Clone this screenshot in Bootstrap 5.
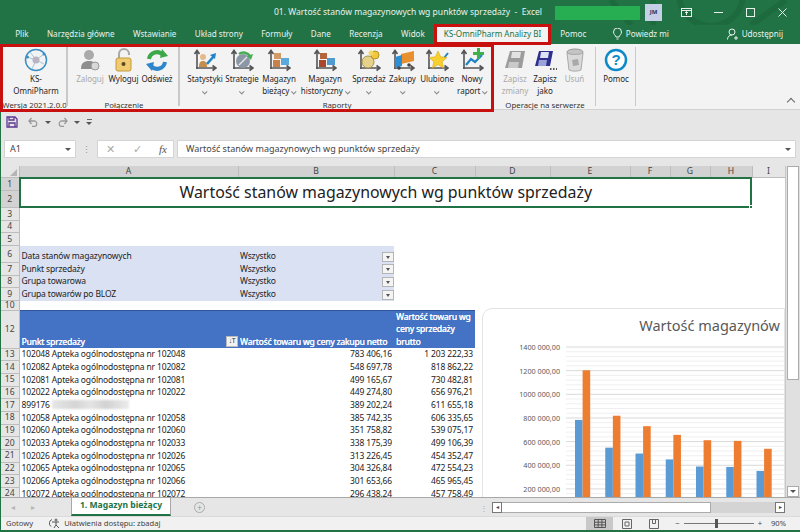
<!DOCTYPE html>
<html lang="pl">
<head>
<meta charset="UTF-8">
<title>KS-OmniPharm Analizy BI</title>
<link href="https://cdn.jsdelivr.net/npm/bootstrap@5.3.0/dist/css/bootstrap.min.css" rel="stylesheet">
<style>
  html, body { width: 800px; height: 532px; overflow: hidden; margin: 0; }
  body { font-family: "Noto Sans", "Liberation Sans", sans-serif; font-size: 8px; color: #333; background: #217346; }
  .app { width: 800px; height: 532px; border-left: 1px solid #217346; border-bottom: 2px solid #217346; background: #e6e6e6; }

  /* title bar */
  .titlebar { height: 25px; background: #217346; color: #fff; position: relative; }
  .titlebar .doc { width: 553px; padding-left: 261px; text-align: center; font-size: 8.550px; color: #e8f1ec; white-space: nowrap; }
  .titlebar .acct { width: 85px; height: 14px; background: #27ae52; margin: 0 5px 0 1px; }
  .titlebar .avatar { width: 17px; height: 17px; background: #c5d0e6; color: #1f3864; font-size: 6px; font-weight: 700; }
  .titlebar .win { width: 32px; }
  .titlebar .deco { position: absolute; left: 600px; top: 0; }

  /* tabs */
  .tabs { height: 19px; background: #217346; color: #e8f1ec; font-size: 8.1px; padding-left: 5px; }
  .tabs .t { padding: 0 9.2px; white-space: nowrap; }
  .tabs .t.active { background: #f3f3f3; color: #217346; height: 21px; padding: 0; width: 117px; justify-content: center; outline: 3px solid #c8100f; outline-offset: -3px; position: relative; z-index: 3; }
  .tabs .share { margin-left: auto; padding-right: 17px; }

  /* ribbon */
  .ribbon { height: 66px; background: #f3f3f3; border-bottom: 1px solid #d2d2d2; position: relative; }
  .rbox { position: absolute; left: -1px; top: 0; width: 494px; height: 68px; border: 3px solid #c8100f; z-index: 2; pointer-events: none; }
  .grp { position: relative; height: 65px; padding-top: 4px; }
  .grp::after { content: ""; position: absolute; right: 0; top: 3px; bottom: 3px; width: 1px; background: #c9c9c9; }
  .g1 { width: 67px; padding-left: 3px; }
  .g2 { width: 112px; padding-left: 5px; }
  .g3 { width: 314px; padding-left: 6px; }
  .g4 { width: 102px; padding-left: 6px; }
  .g5 { width: 40px; }
  .g1::after, .g2::after, .g3::after { width: 2px; }
  .grp .lbl { position: absolute; left: 0; right: 0; bottom: -2px; text-align: center; font-size: 7.8px; line-height: 12px; white-space: nowrap; }
  .rb { text-align: center; line-height: 12px; font-size: 8px; letter-spacing: -.05px; color: #262626; white-space: nowrap; }
  .rb svg { display: block; margin: 0 auto 1px; }
  .rb.off { color: #a9a9a9; }
  .b29 { width: 29px; } .b30 { width: 30px; } .b33 { width: 33px; } .b34 { width: 34px; }
  .b36 { width: 36px; } .b38 { width: 38px; } .b40 { width: 40px; } .b54 { width: 54px; } .b64 { width: 64px; }
  .car { display: inline-block; width: 3.500px; height: 3.500px; border-right: 1px solid #888; border-bottom: 1px solid #888; transform: rotate(45deg) translate(-1px, -1px); margin-left: 3px; }
  .car.solo { margin-left: 0; }
  .collapse-up { position: absolute; right: 6px; bottom: 4px; width: 6px; height: 6px; border-left: 1px solid #666; border-top: 1px solid #666; transform: rotate(45deg); }

  /* quick access + formula */
  .qat { height: 24px; padding-left: 5px; gap: 6px; }
  .qat .bar { width: 5px; height: 1px; background: #666; margin-bottom: 2px; }
  .fbar { height: 32px; padding: 6px 4px 8px 3px; }
  .box { background: #fff; border: 1px solid #d4d4d4; height: 18px; color: #444; font-size: 9px; }
  .name { width: 72px; padding: 0 4px 0 5px; }
  .dots { width: 21px; text-align: center; color: #999; font-size: 9px; line-height: 1; }
  .fx { width: 77px; color: #aaa; padding: 0 6px 0 8px; font-size: 11px; margin-right: 3px; }
  .fx i { font-family: "Liberation Serif", serif; color: #555; }
  .formula { flex: 1; padding: 0 4px 0 8px; }
  .tri { width: 0; height: 0; border-left: 3px solid transparent; border-right: 3px solid transparent; border-top: 3px solid #555; }

  /* sheet */
  .sheet-wrap { height: 331px; position: relative; overflow: hidden; background: #fff; }
  table.sheet { table-layout: fixed; width: 784px; border-collapse: collapse; font-size: 8.500px; letter-spacing: -.15px; color: #222; }
  .c-head { width: 18px; } .c-a { width: 219px; } .c-b { width: 156px; } .c-c { width: 81px; } .c-d { width: 75px; }
  .c-e { width: 80px; } .c-f { width: 40px; } .c-g { width: 40px; } .c-h { width: 42px; } .c-i { width: 33px; }
  .sheet th { font-weight: 400; background: #e6e6e6; color: #444; text-align: center; border-right: 1px solid #bdbdbd; border-bottom: 1px solid #bdbdbd; padding: 0; line-height: 1; font-size: 8.600px; letter-spacing: 0; }
  .sheet thead th { height: 11px; }
  .sheet th.sel { background: #d2d2d2; }
  .sheet td { padding: 0 2px; white-space: nowrap; overflow: hidden; vertical-align: bottom; line-height: 12.500px; }
  .corner { position: relative; }
  .corner::after { content: ""; position: absolute; right: 2px; bottom: 1px; border-left: 7px solid transparent; border-bottom: 7px solid #b5b5b5; }
  .r13 { height: 12.67px; } .r14 { height: 13.6px; } .r17 { height: 17px; } .r7 { height: 7px; } .r38 { height: 38px; }
  .sheet td.title { position: relative; text-align: center; vertical-align: middle; font-size: 15.900px; letter-spacing: 0; color: #222; outline: 2px solid #217346; outline-offset: -2px; line-height: 1; overflow: visible; }
  .handle { position: absolute; right: -1px; bottom: -1px; width: 4px; height: 4px; background: #217346; border: 1px solid #fff; }
  .filter td { background: #d9e1f2; }
  .filter td.val { position: relative; padding-left: 2px; }
  .dd { position: absolute; right: 0; bottom: 1px; width: 12px; height: 10px; background: #f4f4f4; border: 1px solid #b5b5b5; }
  .dd::after { content: ""; position: absolute; left: 3px; top: 3px; border-left: 2.5px solid transparent; border-right: 2.5px solid transparent; border-top: 3px solid #555; }
  .head td { background: #4472c4; color: #fff; text-shadow: .35px 0 #fff; border-top: 1px solid #2f5597; position: relative; }
  .sortbtn { position: absolute; right: 0; bottom: 1px; width: 12px; height: 11px; background: #f2f2f2; border: 1px solid #bbb; color: #333; text-shadow: none; font-size: 7px; letter-spacing: -.5px; }
  .num { text-align: right; }
  .blur { display: inline-block; width: 77px; height: 9px; margin-left: 2px; vertical-align: -1px; background: linear-gradient(90deg, #e6e6e6, #d5d5d5 30%, #e4e4e4 50%, #d2d2d2 70%, #ececec); filter: blur(1px); }

  /* chart */
  .chart { position: absolute; left: 481px; top: 142px; width: 303px; height: 200px; background: #fff; border: 1px solid #e3e3e3; border-radius: 10px 0 0 0; overflow: hidden; }
  .chart text { font-family: "Noto Sans", sans-serif; fill: #595959; }

  /* vertical scrollbar */
  .vscroll { position: absolute; right: 0; top: 0; width: 15px; height: 331px; background: #e0e0e0; border-left: 1px solid #c8c8c8; }
  .vscroll .thumb { width: 12px; height: 214px; background: #fff; border: 1px solid #ababab; margin-left: 1px; }
  .vscroll .arrow { position: absolute; left: 1px; bottom: 0; width: 12px; height: 11px; background: #fff; border: 1px solid #ababab; }

  /* sheet tabs */
  .tabbar { height: 19px; background: #e6e6e6; border-top: 1px solid #a8a8a8; position: relative; padding-left: 10px; }
  .nav { width: 20px; color: #b5b5b5; font-size: 8px; text-align: center; }
  .sheettab { width: 100px; height: 18px; margin-left: 20px; background: #fff; border: 1px solid #a8a8a8; border-top: 0; border-bottom: 2px solid #217346; color: #217346; font-weight: 700; font-size: 8.600px; margin-top: -1px; }
  .addsheet { width: 11px; height: 11px; border: 1px solid #aaa; border-radius: 50%; margin-left: 23px; color: #999; font-size: 9px; line-height: 1; }
  .hscroll { margin-left: auto; width: 293px; height: 11px; margin-right: 15px; background: #d4d4d4; }
  .hscroll .end { width: 10px; height: 11px; background: #fff; border: 1px solid #777; font-size: 6px; color: #444; }
  .hscroll .bar { width: 209px; height: 11px; background: #fff; border: 1px solid #ababab; border-left: 0; }
  .hscroll .rest { flex: 1; }
  .grip { position: absolute; left: 479px; top: 6px; color: #aaa; line-height: 1; font-size: 8px; }

  /* status */
  .status { height: 14px; background: #f1f1f1; border-top: 1px solid #dadada; color: #444; font-size: 7.600px; padding-left: 5px; }
  .status .view { width: 27px; height: 13px; }
  .status .view.on { background: #c8c8c8; }
  .slider { width: 70px; height: 1px; background: #777; position: relative; margin: 0 4px; }
  .slider::after { content: ""; position: absolute; left: 31px; top: -4px; width: 3px; height: 9px; background: #555; }
  .zoom-pct { margin: 0 14px 0 9px; }
</style>
</head>
<body>
<svg width="0" height="0" class="position-absolute">
  <defs>
    <g id="axes" fill="none" stroke="#555" stroke-width="1.6">
      <path d="M4 21V3M1.5 6 4 2.5 6.500 6"/>
      <path d="M3 20H23M19.500 17.500 23 20l-3.500 2.500"/>
    </g>
  </defs>
</svg>

<div class="app d-flex flex-column">
  <div class="titlebar d-flex align-items-center">
    <svg class="deco" width="190" height="25" fill="none" stroke="#1d6a3f" stroke-width="6"><circle cx="110" cy="-6" r="32"/><path d="M10 0 30 25M52 0V25M150 25 185 0"/></svg>
    <div class="doc position-relative">01. Wartość stanów magazynowych wg punktów sprzedaży&nbsp; -&nbsp; Excel</div>
    <div class="acct position-relative"></div>
    <div class="avatar position-relative d-flex align-items-center justify-content-center">JM</div>
    <div class="d-flex position-relative ms-2">
      <div class="win d-flex justify-content-center"><svg width="11" height="9" fill="none" stroke="#e8f1ec"><rect x=".5" y=".5" width="10" height="8"/><path d="M.5 2.500h10M5.500 7V4M4 5l1.500-1.500L7 5"/></svg></div>
      <div class="win d-flex justify-content-center align-items-center"><svg width="9" height="9" stroke="#e8f1ec"><path d="M0 4.500h9"/></svg></div>
      <div class="win d-flex justify-content-center"><svg width="9" height="9" fill="none" stroke="#e8f1ec"><rect x=".5" y=".5" width="8" height="8"/></svg></div>
      <div class="win d-flex justify-content-center"><svg width="9" height="9" stroke="#e8f1ec"><path d="M.5.500l8 8M8.500.500l-8 8"/></svg></div>
    </div>
  </div>

  <div class="tabs d-flex align-items-center">
    <div class="t">Plik</div>
    <div class="t">Narzędzia główne</div>
    <div class="t">Wstawianie</div>
    <div class="t">Układ strony</div>
    <div class="t">Formuły</div>
    <div class="t">Dane</div>
    <div class="t">Recenzja</div>
    <div class="t">Widok</div>
    <div class="t active d-flex align-items-center">KS-OmniPharm Analizy BI</div>
    <div class="t">Pomoc</div>
    <div class="t d-flex align-items-center gap-1 ms-2">
      <svg width="9" height="12" fill="none" stroke="#e8f1ec"><path d="M3 9C2.500 7 .5 6.500.5 4a4 4 0 0 1 8 0C8.500 6.500 6.500 7 6 9zM3.500 11h2"/></svg>
      Powiedz mi
    </div>
    <div class="t share d-flex align-items-center gap-1">
      <svg width="11" height="12" fill="none" stroke="#e8f1ec"><circle cx="5" cy="4" r="3"/><path d="M.5 11.500c0-3 2-4.500 4.500-4.500M7 10h4M9 8v4"/></svg>
      Udostępnij
    </div>
  </div>

  <div class="ribbon d-flex">
    <div class="rbox"></div>

    <div class="grp g1 d-flex">
      <div class="rb b64">
        <svg width="24" height="24" viewBox="0 0 24 24" fill="none"><circle cx="12" cy="12" r="10.500" stroke="#3a8fc4" stroke-width="1.500"/><path d="M3 9 12 12 20 6M12 12 8 21M12 12 20 16M6 4 12 12" stroke="#9fc7de"/><circle cx="12" cy="12" r="3.500" fill="#b9b4c4"/><circle cx="20" cy="6" r="1.500" fill="#3a8fc4"/><circle cx="3.500" cy="9" r="1.500" fill="#3a8fc4"/></svg>
        <div>KS-<br>OmniPharm</div>
      </div>
      <div class="lbl">Wersja 2021.2.0.0</div>
    </div>

    <div class="grp g2 d-flex">
      <div class="rb b34 off">
        <svg width="22" height="24" viewBox="0 0 22 24"><circle cx="10" cy="7" r="5" fill="#aaa"/><path d="M2 21c0-6 3-8 8-8s8 2 8 8z" fill="#8e8e8e"/><circle cx="16" cy="18" r="4" fill="#d8d8d8" stroke="#999"/></svg>
        <div>Zaloguj</div>
      </div>
      <div class="rb b33">
        <svg width="22" height="24" viewBox="0 0 22 24"><path d="M6 11V6a5 5 0 0 1 10 0v1" fill="none" stroke="#a8a8a8" stroke-width="2"/><rect x="3" y="10" width="15" height="13" rx="2" fill="#f1cb72" stroke="#c49a3c"/><circle cx="10.500" cy="16" r="2" fill="#5a4520"/></svg>
        <div>Wyloguj</div>
      </div>
      <div class="rb b34">
        <svg width="24" height="24" viewBox="0 0 24 24" fill="none" stroke-width="4"><path d="M4 11a8 8 0 0 1 14-4" stroke="#3da84a"/><path d="M23 8 15 10 17 1z" fill="#3da84a"/><path d="M20 14a8 8 0 0 1-14 4" stroke="#2c86c9"/><path d="M1 16 9 14 7 23z" fill="#2c86c9"/></svg>
        <div>Odśwież</div>
      </div>
      <div class="lbl">Połączenie</div>
    </div>

    <div class="grp g3 d-flex">
      <div class="rb b38">
        <svg width="24" height="24" viewBox="0 0 24 24"><use href="#axes"/><circle cx="10" cy="9" r="3" fill="#e6b98c"/><path d="M6 19c0-4 1-6 4-6s4 2 4 6z" fill="#c98d4a"/><path d="M14 16 21 8" stroke="#1f83c6" stroke-width="2.500"/><path d="M23 5 22 11 17 7z" fill="#1f83c6"/></svg>
        <div>Statystyki<br><span class="car solo"></span></div>
      </div>
      <div class="rb b36">
        <svg width="24" height="24" viewBox="0 0 24 24"><use href="#axes"/><circle cx="13" cy="13" r="7" fill="#8b97a6"/><path d="M9 17 17 9" stroke="#e6e6e6" stroke-width="1.500"/><path d="M9 6a8 8 0 0 1 11 2" fill="none" stroke="#47ad54" stroke-width="2.500"/><path d="M23 6 21 12 17 8z" fill="#47ad54"/></svg>
        <div>Strategie<br><span class="car solo"></span></div>
      </div>
      <div class="rb b38">
        <svg width="24" height="24" viewBox="0 0 24 24"><use href="#axes"/><rect x="7" y="5" width="7" height="6" fill="#d19a66"/><rect x="6" y="12" width="7" height="7" fill="#c9814a"/><rect x="14" y="10" width="8" height="7" fill="#5aa9dc"/></svg>
        <div>Magazyn<br>bieżący<span class="car"></span></div>
      </div>
      <div class="rb b54">
        <svg width="24" height="24" viewBox="0 0 24 24"><use href="#axes"/><rect x="7" y="5" width="7" height="6" fill="#b5633c"/><rect x="6" y="12" width="7" height="7" fill="#a8492c"/><rect x="14" y="10" width="8" height="7" fill="#4f9ad0"/></svg>
        <div>Magazyn<br>historyczny<span class="car"></span></div>
      </div>
      <div class="rb b34">
        <svg width="24" height="24" viewBox="0 0 24 24"><use href="#axes"/><circle cx="11" cy="14" r="6" fill="#e6d28a" stroke="#a89348"/><circle cx="18" cy="7" r="4" fill="#efc93a" stroke="#b5922a"/><circle cx="14" cy="5" r="2.500" fill="#f3d864"/></svg>
        <div>Sprzedaż<br><span class="car solo"></span></div>
      </div>
      <div class="rb b33">
        <svg width="24" height="24" viewBox="0 0 24 24"><use href="#axes"/><path d="M10 6 23 3v10l-13 3z" fill="#e88f2e"/><path d="M4 9l7-2v11l-7 2z" fill="#2c8fd6"/><circle cx="8" cy="20" r="1.800" fill="#444"/><circle cx="18" cy="17" r="1.800" fill="#444"/></svg>
        <div>Zakupy<br><span class="car solo"></span></div>
      </div>
      <div class="rb b36">
        <svg width="24" height="24" viewBox="0 0 24 24"><use href="#axes"/><path d="M19 10 23 5" stroke="#1f83c6" stroke-width="2"/><path d="M13 3l2.600 5.800 6.400.7-4.800 4.200 1.400 6.300-5.600-3.300-5.600 3.300 1.400-6.300L4 9.500l6.400-.7z" fill="#f7cf2e" stroke="#d9a91c" stroke-width=".6"/></svg>
        <div>Ulubione<br><span class="car solo"></span></div>
      </div>
      <div class="rb b34">
        <svg width="24" height="24" viewBox="0 0 24 24"><use href="#axes"/><path d="M6 17 11 11 15 14 22 7" fill="none" stroke="#1f83c6" stroke-width="2.200"/><path d="M17 0h3v4h4v3h-4v4h-3V7h-4V4h4z" fill="#3fb14a"/></svg>
        <div>Nowy<br>raport<span class="car"></span></div>
      </div>
      <div class="lbl">Raporty</div>
    </div>

    <div class="grp g4 d-flex">
      <div class="rb b30 off">
        <svg width="24" height="24" viewBox="0 0 24 24"><path d="M7 3h15l-3 17H2z" fill="#9c9c9c"/><path d="M9 4h9l-1 6H8z" fill="#e2e2e2"/><path d="M6 14h10l-1 6H5z" fill="#c9c9c9"/></svg>
        <div>Zapisz<br>zmiany</div>
      </div>
      <div class="rb b30">
        <svg width="24" height="24" viewBox="0 0 24 24"><path d="M6 3h14l-3 15H2z" fill="#2e2f8f"/><path d="M8 4h8l-1 6H7z" fill="#dfe2f5"/><path d="M6 12h8l-1 6H5z" fill="#9aa2d8"/><path d="M17 21h1.500M20 21h1.500M23 21h1" stroke="#222" stroke-width="1.500"/></svg>
        <div>Zapisz<br>jako</div>
      </div>
      <div class="rb b29 off">
        <svg width="20" height="24" viewBox="0 0 20 24"><ellipse cx="10" cy="4" rx="8" ry="3" fill="#c4c4c4" stroke="#999"/><path d="M2 5 4 22c3 1.500 9 1.500 12 0l2-17c-4 2-12 2-16 0z" fill="#d9d9d9" stroke="#aaa"/><path d="M7 12l6-1 1 6-6 1z" fill="#a9a9a9"/></svg>
        <div>Usuń</div>
      </div>
      <div class="lbl">Operacje na serwerze</div>
    </div>

    <div class="grp g5 d-flex">
      <div class="rb b40">
        <svg width="24" height="24" viewBox="0 0 24 24"><circle cx="12" cy="12" r="10" fill="#fff" stroke="#0e8ac8" stroke-width="2.500"/><text x="12" y="17" text-anchor="middle" font-family="Liberation Sans, sans-serif" font-weight="700" font-size="15" fill="#0e8ac8">?</text></svg>
        <div>Pomoc</div>
      </div>
    </div>
    <div class="collapse-up"></div>
  </div>

  <div class="qat d-flex align-items-center">
    <svg width="12" height="12" viewBox="0 0 12 12" fill="none" stroke="#5c3a93" stroke-width="1.300"><path d="M1 1h8l2 2v8H1z"/><path d="M3 1v3h5V1M3 11V7h6v4"/></svg>
    <svg class="ms-1" width="11" height="10" viewBox="0 0 11 10" fill="none" stroke="#999" stroke-width="1.300"><path d="M1 4h6a3 3 0 0 1 0 5.500H4M3.500 1 1 4l2.500 3"/></svg>
    <div class="tri"></div>
    <svg width="11" height="10" viewBox="0 0 11 10" fill="none" stroke="#999" stroke-width="1.300"><path d="M10 4H4a3 3 0 0 0 0 5.500h3M7.500 1 10 4 7.500 7"/></svg>
    <div class="tri"></div>
    <div class="d-flex flex-column align-items-center"><div class="bar"></div><div class="tri"></div></div>
  </div>

  <div class="fbar d-flex align-items-center">
    <div class="box name d-flex align-items-center justify-content-between">A1<div class="tri"></div></div>
    <div class="dots">⋮</div>
    <div class="box fx d-flex align-items-center justify-content-between"><span>✕</span><span>✓</span><i>fx</i></div>
    <div class="box formula d-flex align-items-center justify-content-between">Wartość stanów magazynowych wg punktów sprzedaży<div class="tri"></div></div>
  </div>

  <div class="sheet-wrap">
    <table class="sheet">
      <colgroup>
        <col class="c-head"><col class="c-a"><col class="c-b"><col class="c-c"><col class="c-d"><col class="c-e"><col class="c-f"><col class="c-g"><col class="c-h"><col class="c-i">
      </colgroup>
      <thead>
        <tr>
          <th class="corner"></th><th class="sel">A</th><th class="sel">B</th><th class="sel">C</th><th class="sel">D</th><th class="sel">E</th><th class="sel">F</th><th class="sel">G</th><th class="sel">H</th><th>I</th>
        </tr>
      </thead>
      <tbody id="rows">
        <tr class="r14"><th class="sel">1</th><td class="title" colspan="8" rowspan="2">Wartość stanów magazynowych wg punktów sprzedaży<span class="handle"></span></td><td></td></tr>
        <tr class="r17"><th class="sel">2</th><td></td></tr>
        <tr class="r13"><th>3</th><td colspan="9"></td></tr>
        <tr class="r13"><th>4</th><td colspan="9"></td></tr>
        <tr class="r13"><th>5</th><td colspan="9"></td></tr>
        <tr class="r17 filter"><th>6</th><td>Data stanów magazynowych</td><td class="val">Wszystko<span class="dd"></span></td></tr>
        <tr class="r13 filter"><th>7</th><td>Punkt sprzedaży</td><td class="val">Wszystko<span class="dd"></span></td></tr>
        <tr class="r13 filter"><th>8</th><td>Grupa towarowa</td><td class="val">Wszystko<span class="dd"></span></td></tr>
        <tr class="r13 filter"><th>9</th><td>Grupa towarów po BLOZ</td><td class="val">Wszystko<span class="dd"></span></td></tr>
        <tr class="r7"><th>10</th><td colspan="9"></td></tr>
        <tr class="r38 head">
          <th>12</th>
          <td>Punkt sprzedaży<span class="sortbtn d-flex align-items-center justify-content-center">↓T</span></td>
          <td>Wartość towaru wg ceny zakupu netto</td>
          <td>Wartość towaru wg<br>ceny sprzedaży<br>brutto</td>
        </tr>
      </tbody>
    </table>

    <div class="chart">
      <svg id="chartSvg" width="303" height="200"></svg>
    </div>

    <div class="vscroll"><div class="thumb"></div><div class="arrow d-flex align-items-center justify-content-center"><div class="tri"></div></div></div>
  </div>

  <div class="tabbar d-flex align-items-center">
    <div class="nav">◂</div><div class="nav">▸</div>
    <div class="sheettab d-flex align-items-center justify-content-center">1. Magazyn bieżący</div>
    <div class="addsheet d-flex align-items-center justify-content-center">+</div>
    <div class="grip">⋮</div>
    <div class="hscroll d-flex">
      <div class="end d-flex align-items-center justify-content-center">◂</div>
      <div class="bar"></div>
      <div class="rest"></div>
      <div class="end d-flex align-items-center justify-content-center">▸</div>
    </div>
  </div>

  <div class="status d-flex align-items-center">
    <span>Gotowy</span>
    <svg class="ms-3" width="11" height="11" viewBox="0 0 11 11" fill="none" stroke="#555"><path d="M3 1.500a4 4 0 0 0-1 7"/><circle cx="7" cy="2" r="1"/><path d="M3 4h7M7 4v3l-2 3M7 7l3 3"/></svg>
    <span class="ms-1">Ułatwienia dostępu: zbadaj</span>
    <div class="ms-auto d-flex align-items-center">
      <div class="view on d-flex align-items-center justify-content-center"><svg width="12" height="9" fill="none" stroke="#555"><path d="M.5.500h11v8H.5zM.5 3.200h11M.5 5.900h11M4.200.500v8M7.900.500v8"/></svg></div>
      <div class="view d-flex align-items-center justify-content-center"><svg width="10" height="10" fill="none" stroke="#666"><path d="M.5.500h9v9h-9zM3 3h4v4H3z"/></svg></div>
      <div class="view d-flex align-items-center justify-content-center"><svg width="10" height="10" fill="none" stroke="#666"><path d="M.5.500h9v9h-9zM3.500.500v4h3v-4"/></svg></div>
      <span class="ms-2">−</span>
      <div class="slider"></div>
      <span>+</span>
      <span class="zoom-pct">90%</span>
    </div>
  </div>
</div>

<script>
  const data = [
    ['102048 Apteka ogólnodostępna nr 102048', '783 406,16', '1 203 222,33', 783406, 1203222],
    ['102082 Apteka ogólnodostępna nr 102082', '548 697,78', '818 862,22', 548697, 818862],
    ['102081 Apteka ogólnodostępna nr 102081', '499 165,67', '730 482,81', 499165, 730482],
    ['102022 Apteka ogólnodostępna nr 102022', '449 274,80', '656 976,21', 449274, 656976],
    ['899176<span class="blur"></span>', '389 202,24', '611 655,18', 389202, 611655],
    ['102058 Apteka ogólnodostępna nr 102058', '385 742,35', '606 335,65', 385742, 606335],
    ['102060 Apteka ogólnodostępna nr 102060', '351 758,82', '539 075,17', 351758, 539075],
    ['102033 Apteka ogólnodostępna nr 102033', '338 175,39', '499 106,39'],
    ['102026 Apteka ogólnodostępna nr 102026', '313 226,45', '454 352,47'],
    ['102065 Apteka ogólnodostępna nr 102065', '304 326,84', '472 554,23'],
    ['102066 Apteka ogólnodostępna nr 102066', '301 653,66', '465 965,45'],
    ['102072 Apteka ogólnodostępna nr 102072', '296 438,24', '457 758,49']
  ];

  // table rows 13-24
  const tbody = document.getElementById('rows');
  data.forEach((row, i) => {
    const tr = document.createElement('tr');
    tr.className = 'r13';
    tr.innerHTML = `<th>${13 + i}</th><td>${row[0]}</td><td class="num">${row[1]}</td><td class="num">${row[2]}</td>`;
    tbody.appendChild(tr);
  });

  // column chart, coordinates relative to the chart box
  const y = v => 38 + (1400000 - v) * 23.65 / 200000;
  let svg = '<text x="297" y="22" text-anchor="end" font-size="14.500">Wartość magazynów</text>';
  for (let v = 1400000; v > 0; v -= 40000) {
    const major = v % 200000 === 0;
    svg += `<path d="M83 ${y(v)}H303" stroke="${major ? '#d9d9d9' : '#efefef'}"/>`;
    if (major) {
      svg += `<text x="77" y="${y(v) + 3}" text-anchor="end" font-size="7.200">${v / 1000} 000,00</text>`;
    }
  }
  data.slice(0, 7).forEach((row, i) => {
    const x = 92 + i * 30.25;
    svg += `<rect x="${x}" y="${y(row[3])}" width="7.600" height="200" fill="#5b9bd5"/>`;
    svg += `<rect x="${x + 7.6}" y="${y(row[4])}" width="7.600" height="200" fill="#ed7d31"/>`;
  });
  document.getElementById('chartSvg').innerHTML = svg;
</script>
<script src="https://cdn.jsdelivr.net/npm/bootstrap@5.3.0/dist/js/bootstrap.bundle.min.js"></script>
</body>
</html>
